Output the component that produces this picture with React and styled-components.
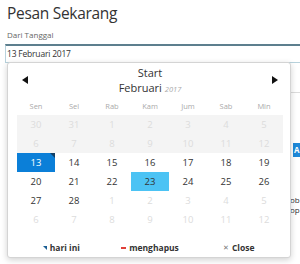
import React from 'react';
import styled, { createGlobalStyle } from 'styled-components';

const Global = createGlobalStyle`
  html, body { margin: 0; padding: 0; background: #fff; }
  body {
    width: 300px; height: 264px; overflow: hidden;
    font-family: "Open Sans", "Noto Sans", sans-serif; color: #333;
  }
`;

const Page = styled.div`
  padding: 3px 0 0 5px;
  width: 295px;
`;

const Title = styled.h1`
  margin: 0 0 0 2px;
  font-size: 15.5px;
  font-weight: 400;
  line-height: 20px;
  letter-spacing: -0.3px;
  color: #333;
`;

const Label = styled.div`
  margin: 6px 0 0 2px;
  font-size: 8px;
  line-height: 11px;
  color: #666;
`;

const Field = styled.div`
  position: relative;
  margin-top: 4px;
`;

const Input = styled.div`
  height: 16px;
  border: 1px solid #b8d2dc;
  border-top: 2px solid #5d7f8e;
  border-right: none;
  padding-left: 1px;
  font-size: 8.5px;
  line-height: 16px;
  color: #333;
  letter-spacing: -0.2px;
`;

const Below = styled.div`
  display: flex;
`;

const Spacer = styled.div`
  width: 284px;
  flex: none;
`;

const Side = styled.div`
  flex: 1;
  border-left: 1px solid #cfcfcf;
`;

const SideBox = styled.div`
  height: 29px;
  border-bottom: 1px solid #dcdcdc;
`;

const SideButton = styled.div`
  margin: 50px 0 0 3px;
  height: 14px;
  background: #1e88d8;
  color: #fff;
  font-size: 8px;
  font-weight: 700;
  line-height: 14px;
  padding-left: 1px;
`;

const SideText = styled.div`
  margin: 38px 0 0 0;
  font-size: 8px;
  line-height: 10px;
  color: #333;
`;

const Popup = styled.div`
  position: absolute;
  top: calc(100% - 1px);
  left: 2px;
  width: 266px;
  padding: 0 7px 0 9px;
  background: #fff;
  border: 1px solid #d4d4d4;
  border-radius: 3px;
  box-shadow: 0 2px 6px rgba(0, 0, 0, 0.18);
  z-index: 2;
`;

const Header = styled.div`
  display: flex;
  align-items: flex-start;
  justify-content: space-between;
  padding: 3px 5px 0 5px;
`;

const Arrow = styled.span`
  margin-top: 10px;
  width: 0;
  height: 0;
  border-top: 4.5px solid transparent;
  border-bottom: 4.5px solid transparent;
  ${(p) => (p.$dir === 'left'
    ? 'border-right: 6.5px solid #111;'
    : 'border-left: 6.5px solid #111;')}
`;

const HeadTitle = styled.div`
  flex: 1;
  text-align: center;
  font-size: 11px;
  line-height: 14.5px;
  color: #333;
`;

const Year = styled.span`
  font-size: 7.5px;
  font-style: italic;
  color: #aaa;
  margin-left: 3px;
`;

const Grid = styled.div`
  display: grid;
  grid-template-columns: repeat(7, 38px);
  grid-auto-rows: 19px;
`;

const WeekDay = styled.div`
  height: 20px;
  line-height: 20px;
  text-align: center;
  font-size: 7.5px;
  color: #aaa;
`;

const cellBg = {
  selected: '#0b7fd8',
  range: '#4cc3f4',
};

const Cell = styled.div`
  position: relative;
  text-align: center;
  line-height: 19px;
  font-size: 9.5px;
  background: ${(p) => cellBg[p.$kind] || (p.$shade ? '#f4f4f4' : '#fff')};
  color: ${(p) => (p.$kind === 'selected' ? '#fff' : p.$kind === 'off' ? '#dcdcdc' : '#333')};
`;

const Corner = styled.span`
  position: absolute;
  top: 0;
  right: 0;
  width: 0;
  height: 0;
  border-top: 5px solid #123f66;
  border-left: 5px solid transparent;
`;

const Footer = styled.div`
  display: grid;
  grid-template-columns: repeat(3, 1fr);
  padding: 14px 0 4px;
  font-size: 8.5px;
  font-weight: 700;
  line-height: 10px;
  color: #333;
`;

const FootItem = styled.div`
  display: flex;
  align-items: center;
  justify-content: center;
  gap: 3px;
`;

const TodayIcon = styled.span`
  width: 0;
  height: 0;
  border-top: 4px solid #1b5f94;
  border-left: 4px solid transparent;
  margin-top: -1px;
`;

const ClearIcon = styled.span`
  width: 5px;
  height: 2px;
  background: #e0403a;
`;

const CloseIcon = styled.span`
  font-size: 7px;
  font-weight: 400;
  color: #777;
`;

const weekDays = ['Sen', 'Sel', 'Rab', 'Kam', 'Jum', 'Sab', 'Min'];

const rows = [
  { shade: true, days: [[30, 'off'], [31, 'off'], [1, 'off'], [2, 'off'], [3, 'off'], [4, 'off'], [5, 'off']] },
  { shade: true, days: [[6, 'off'], [7, 'off'], [8, 'off'], [9, 'off'], [10, 'off'], [11, 'off'], [12, 'off']] },
  { days: [[13, 'selected', true], [14], [15], [16], [17], [18], [19]] },
  { days: [[20], [21], [22], [23, 'range'], [24], [25], [26]] },
  { days: [[27], [28], [1, 'off'], [2, 'off'], [3, 'off'], [4, 'off'], [5, 'off']] },
  { days: [[6, 'off'], [7, 'off'], [8, 'off'], [9, 'off'], [10, 'off'], [11, 'off'], [12, 'off']] },
];

export default function App() {
  return (
    <>
      <Global />
      <Page>
        <Title>Pesan Sekarang</Title>
        <Label>Dari Tanggal</Label>
        <Field>
          <Input>13 Februari 2017</Input>
          <Popup>
            <Header>
              <Arrow $dir="left" />
              <HeadTitle>
                <div>Start</div>
                <div>Februari<Year>2017</Year></div>
              </HeadTitle>
              <Arrow $dir="right" />
            </Header>
            <Grid>
              {weekDays.map((d) => <WeekDay key={d}>{d}</WeekDay>)}
              {rows.map((r, ri) =>
                r.days.map(([n, kind, today], ci) => (
                  <Cell key={`${ri}-${ci}`} $kind={kind} $shade={r.shade}>
                    {n}
                    {today && <Corner />}
                  </Cell>
                ))
              )}
            </Grid>
            <Footer>
              <FootItem><TodayIcon />hari ini</FootItem>
              <FootItem><ClearIcon />menghapus</FootItem>
              <FootItem><CloseIcon>✕</CloseIcon>Close</FootItem>
            </Footer>
          </Popup>
        </Field>
        <Below>
          <Spacer />
          <Side>
            <SideBox />
            <SideButton>A</SideButton>
            <SideText>ob<br />op</SideText>
          </Side>
        </Below>
      </Page>
    </>
  );
}
